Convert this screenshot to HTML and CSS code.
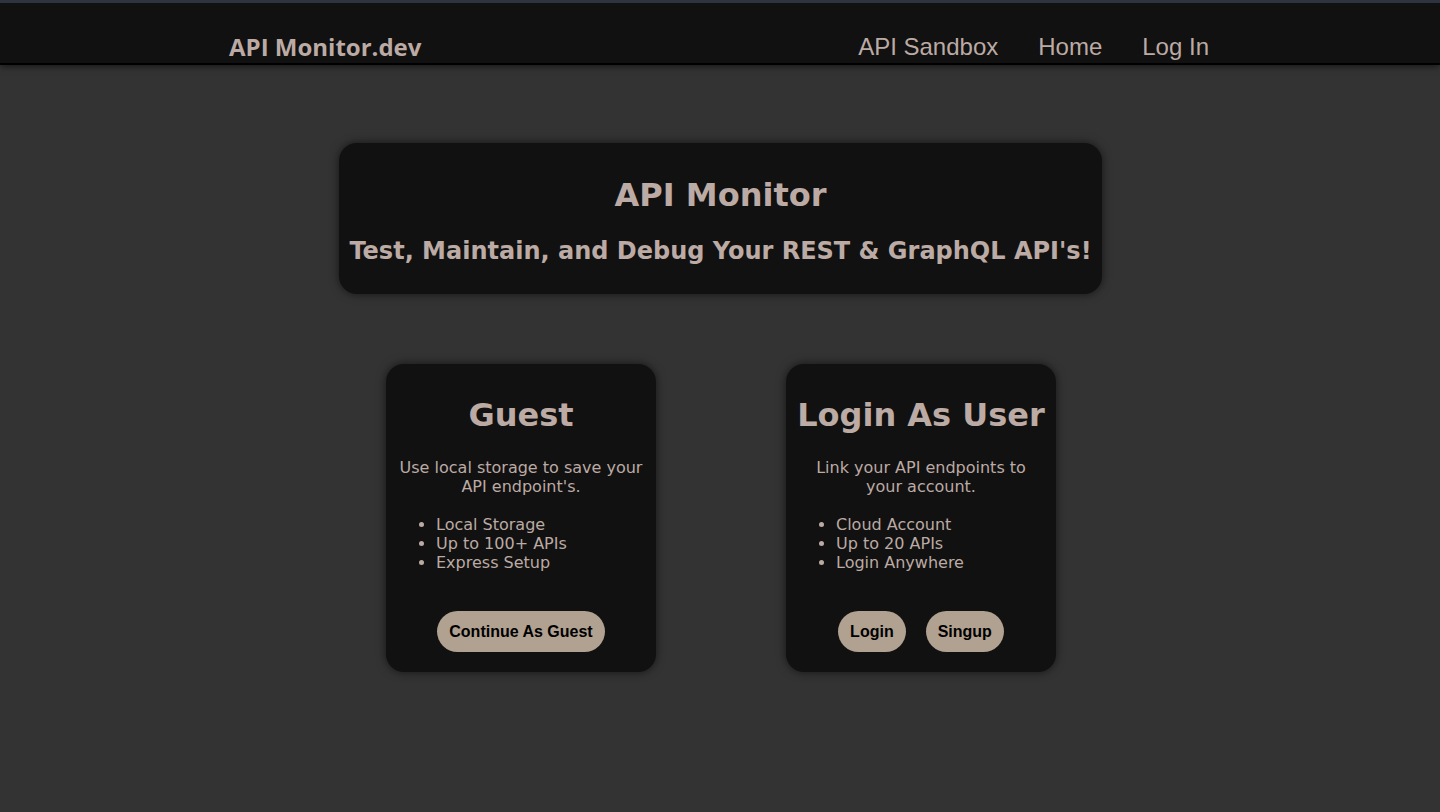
FILE: index.html
```html
<!DOCTYPE html>
<html lang="en">
<head>
<meta charset="utf-8">
<title>API Monitor.dev</title>
<link rel="stylesheet" href="styles.css">
</head>
<body>
<header class="navbar">
  <div class="nav-inner">
    <a class="logo" href="#">API Monitor.dev</a>
    <nav class="nav-links">
      <a href="#">API Sandbox</a>
      <a href="#">Home</a>
      <a href="#">Log In</a>
    </nav>
  </div>
</header>
<main class="main">
  <section class="hero">
    <h1 class="hero-title">API Monitor</h1>
    <h2 class="hero-sub">Test, Maintain, and Debug Your REST &amp; GraphQL API's!</h2>
  </section>
  <section class="options">
    <div class="card">
      <h2 class="card-title">Guest</h2>
      <p class="card-text">Use local storage to save your API endpoint's.</p>
      <ul class="card-list">
        <li>Local Storage</li>
        <li>Up to 100+ APIs</li>
        <li>Express Setup</li>
      </ul>
      <div class="card-actions">
        <button class="btn">Continue As Guest</button>
      </div>
    </div>
    <div class="card">
      <h2 class="card-title">Login As User</h2>
      <p class="card-text">Link your API endpoints to your account.</p>
      <ul class="card-list">
        <li>Cloud Account</li>
        <li>Up to 20 APIs</li>
        <li>Login Anywhere</li>
      </ul>
      <div class="card-actions">
        <button class="btn">Login</button>
        <button class="btn">Singup</button>
      </div>
    </div>
  </section>
</main>
</body>
</html>
```
FILE: styles.css
```css
* { box-sizing: border-box; }
html, body { margin: 0; padding: 0; }
body {
  background: #333333;
  min-height: 812px;
  color: #bcaaa4;
  font-family: Verdana, "DejaVu Sans", sans-serif;
}
.navbar {
  background: #111111;
  border-top: 3px solid #2f3340;
  border-bottom: 2px solid #000;
  box-shadow: 0 2px 6px rgba(0,0,0,0.5);
  height: 65px;
}
.nav-inner {
  width: 982px;
  margin: 0 auto;
  height: 60px;
  display: flex;
  justify-content: space-between;
  align-items: flex-end;
  padding-bottom: 1px;
}
.logo {
  font-family: "Open Sans", sans-serif;
  font-weight: 700;
  font-size: 24px;
  color: #bcaaa4;
  text-decoration: none;
  line-height: 30px;
}
.nav-links {
  display: flex;
  gap: 40px;
  padding-right: 2px;
}
.nav-links a {
  font-family: "Liberation Sans", Arial, sans-serif;
  font-size: 24px;
  color: #bcaaa4;
  text-decoration: none;
  line-height: 30px;
}
.main {
  display: flex;
  flex-direction: column;
  align-items: center;
  padding-top: 78px;
}
.hero {
  background: #111111;
  border-radius: 18px;
  box-shadow: 0 0 10px rgba(0,0,0,0.6);
  padding: 32px 10px 28px;
  text-align: center;
  margin-left: 1px;
}
.hero-title {
  margin: 0;
  font-size: 32px;
  line-height: 40px;
  font-weight: 700;
}
.hero-sub {
  margin: 21px 0 0;
  font-size: 24px;
  line-height: 30px;
  font-weight: 700;
}
.options {
  display: flex;
  gap: 130px;
  margin-top: 70px;
  margin-left: 2px;
}
.card {
  width: 270px;
  height: 308px;
  background: #111111;
  border-radius: 18px;
  box-shadow: 0 0 10px rgba(0,0,0,0.6);
  padding: 30px 10px 20px;
  display: flex;
  flex-direction: column;
  text-align: center;
}
.card-title {
  margin: 0;
  font-size: 32px;
  line-height: 42px;
  font-weight: 700;
}
.card-text {
  margin: 22px 0 0;
  font-size: 16px;
  line-height: 19px;
}
.card-list {
  margin: 19px 0 0;
  padding-left: 40px;
  text-align: left;
  font-size: 16px;
  line-height: 19px;
}
.card-actions {
  margin-top: auto;
  display: flex;
  justify-content: center;
  gap: 20px;
}
.btn {
  font-family: "Liberation Sans", Arial, sans-serif;
  font-weight: 700;
  font-size: 16px;
  color: #000;
  background: #b0a191;
  border: none;
  border-radius: 21px;
  height: 41px;
  padding: 0 12px;
}
```
